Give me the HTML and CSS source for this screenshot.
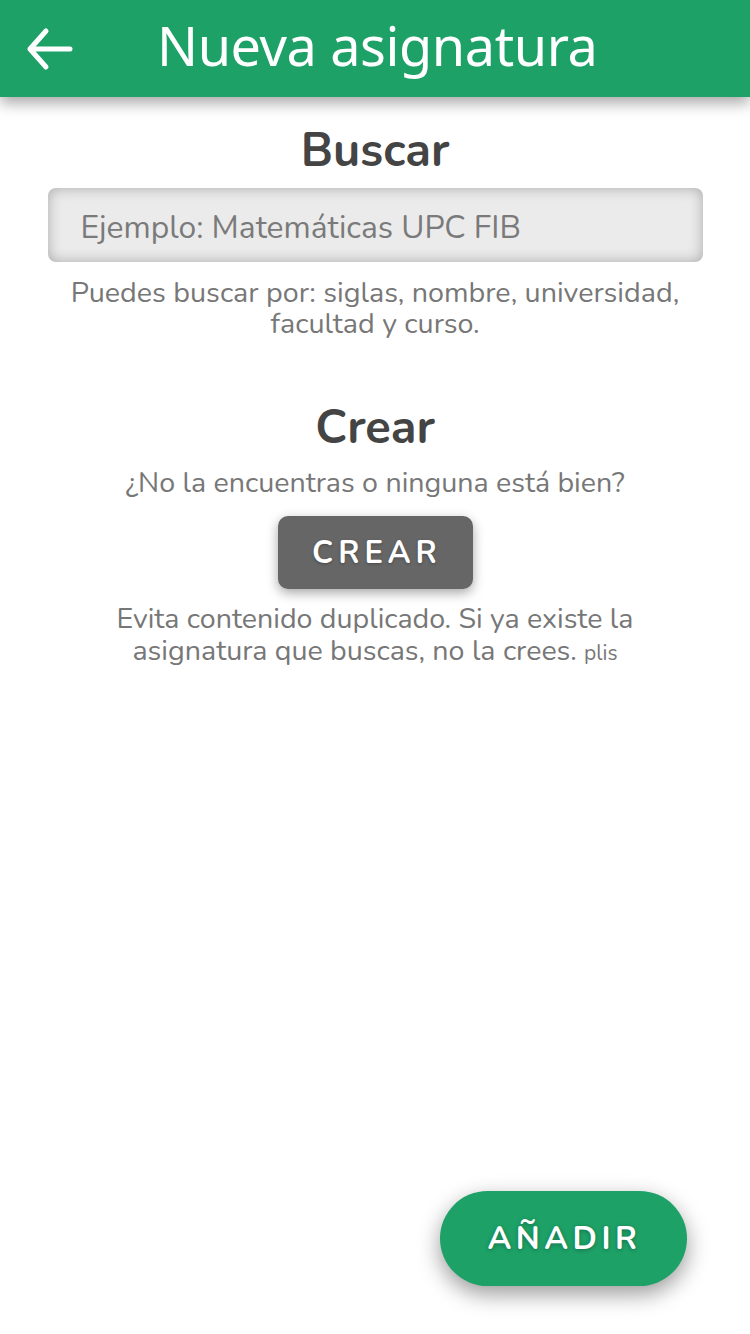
FILE: index.html
```html
<!DOCTYPE html>
<html lang="es">
<head>
<meta charset="utf-8">
<title>Nueva asignatura</title>
<link rel="stylesheet" href="styles.css">
</head>
<body>
<div class="app">
  <header class="topbar">
    <button class="back" aria-label="Atrás">
      <svg width="50" height="46" viewBox="0 0 50 46"><path d="M46 23H6M22 5L6 23L22 41" fill="none" stroke="#fff" stroke-width="5" stroke-linecap="round" stroke-linejoin="round"/></svg>
    </button>
    <h1 class="title">Nueva asignatura</h1>
  </header>
  <main class="content">
    <section class="section">
      <h2 class="heading">Buscar</h2>
      <div class="search">Ejemplo: Matemáticas UPC FIB</div>
      <p class="hint">Puedes buscar por: siglas, nombre, universidad, facultad y curso.</p>
    </section>
    <section class="section create">
      <h2 class="heading">Crear</h2>
      <p class="question">¿No la encuentras o ninguna está bien?</p>
      <button class="btn-crear">CREAR</button>
      <p class="warn">Evita contenido duplicado. Si ya existe la asignatura que buscas, no la crees.&nbsp;<span class="plis">plis</span></p>
    </section>
  </main>
  <button class="fab">AÑADIR</button>
</div>
</body>
</html>
```

FILE: styles.css
```css
html, body {
  margin: 0;
  padding: 0;
  background: #fff;
}
body {
  font-family: "Nunito", Lato, "Noto Sans", sans-serif;
  width: 750px;
  height: 1334px;
  overflow: hidden;
}
.app {
  position: relative;
  width: 750px;
  height: 1334px;
}
.topbar {
  height: 97px;
  background: #1da167;
  display: flex;
  align-items: center;
  box-shadow: 0 6px 14px rgba(0,0,0,0.35);
  position: relative;
  z-index: 2;
}
.back {
  background: none;
  border: 0;
  padding: 0;
  margin-left: 24px;
  width: 50px;
  height: 46px;
  display: flex;
}
.title {
  margin: 0 0 0 83px;
  color: #fff;
  font-family: "Noto Sans", sans-serif;
  font-weight: 400;
  font-size: 54px;
  letter-spacing: -0.4px;
  line-height: 1;
  padding-bottom: 8px;
}
.content {
  display: flex;
  flex-direction: column;
  align-items: center;
  padding-top: 25px;
}
.section {
  display: flex;
  flex-direction: column;
  align-items: center;
  width: 100%;
}
.heading {
  margin: 0;
  font-size: 47px;
  font-weight: 700;
  color: #444;
  line-height: 58px;
}
.search {
  margin-top: 8px;
  width: 655px;
  height: 74px;
  box-sizing: border-box;
  border-radius: 8px;
  background: #ebebeb;
  box-shadow: inset 0 0 14px rgba(0,0,0,0.28);
  color: #7a7a7a;
  font-size: 31.8px;
  display: flex;
  align-items: center;
  padding: 4px 0 0 33px;
}
.hint {
  margin: 15px 0 0;
  width: 660px;
  text-align: center;
  font-size: 28.7px;
  line-height: 31px;
  color: #777;
}
.create {
  margin-top: 60px;
}
.question {
  margin: 10px 0 0;
  font-size: 28.6px;
  line-height: 32px;
  color: #777;
}
.btn-crear {
  margin-top: 17px;
  width: 195px;
  height: 73px;
  border: 0;
  border-radius: 10px;
  background: #666;
  color: #fff;
  font-family: inherit;
  font-weight: 700;
  font-size: 31px;
  letter-spacing: 5px;
  padding-left: 10px;
  box-shadow: 0 4px 12px rgba(0,0,0,0.35);
  text-shadow: 0 1px 3px rgba(0,0,0,0.3);
}
.warn {
  margin: 14px 0 0;
  width: 560px;
  text-align: center;
  font-size: 28.6px;
  line-height: 32px;
  color: #777;
}
.plis {
  font-size: 21px;
  line-height: 1;
}
.fab {
  position: absolute;
  left: 440px;
  top: 1191px;
  width: 247px;
  height: 95px;
  border: 0;
  border-radius: 48px;
  background: #1da167;
  color: #fff;
  font-family: inherit;
  font-weight: 700;
  font-size: 32px;
  letter-spacing: 4.5px;
  padding-left: 8px;
  box-shadow: 0 8px 22px rgba(0,0,0,0.4);
  text-shadow: 0 1px 4px rgba(0,0,0,0.3);
}
```
